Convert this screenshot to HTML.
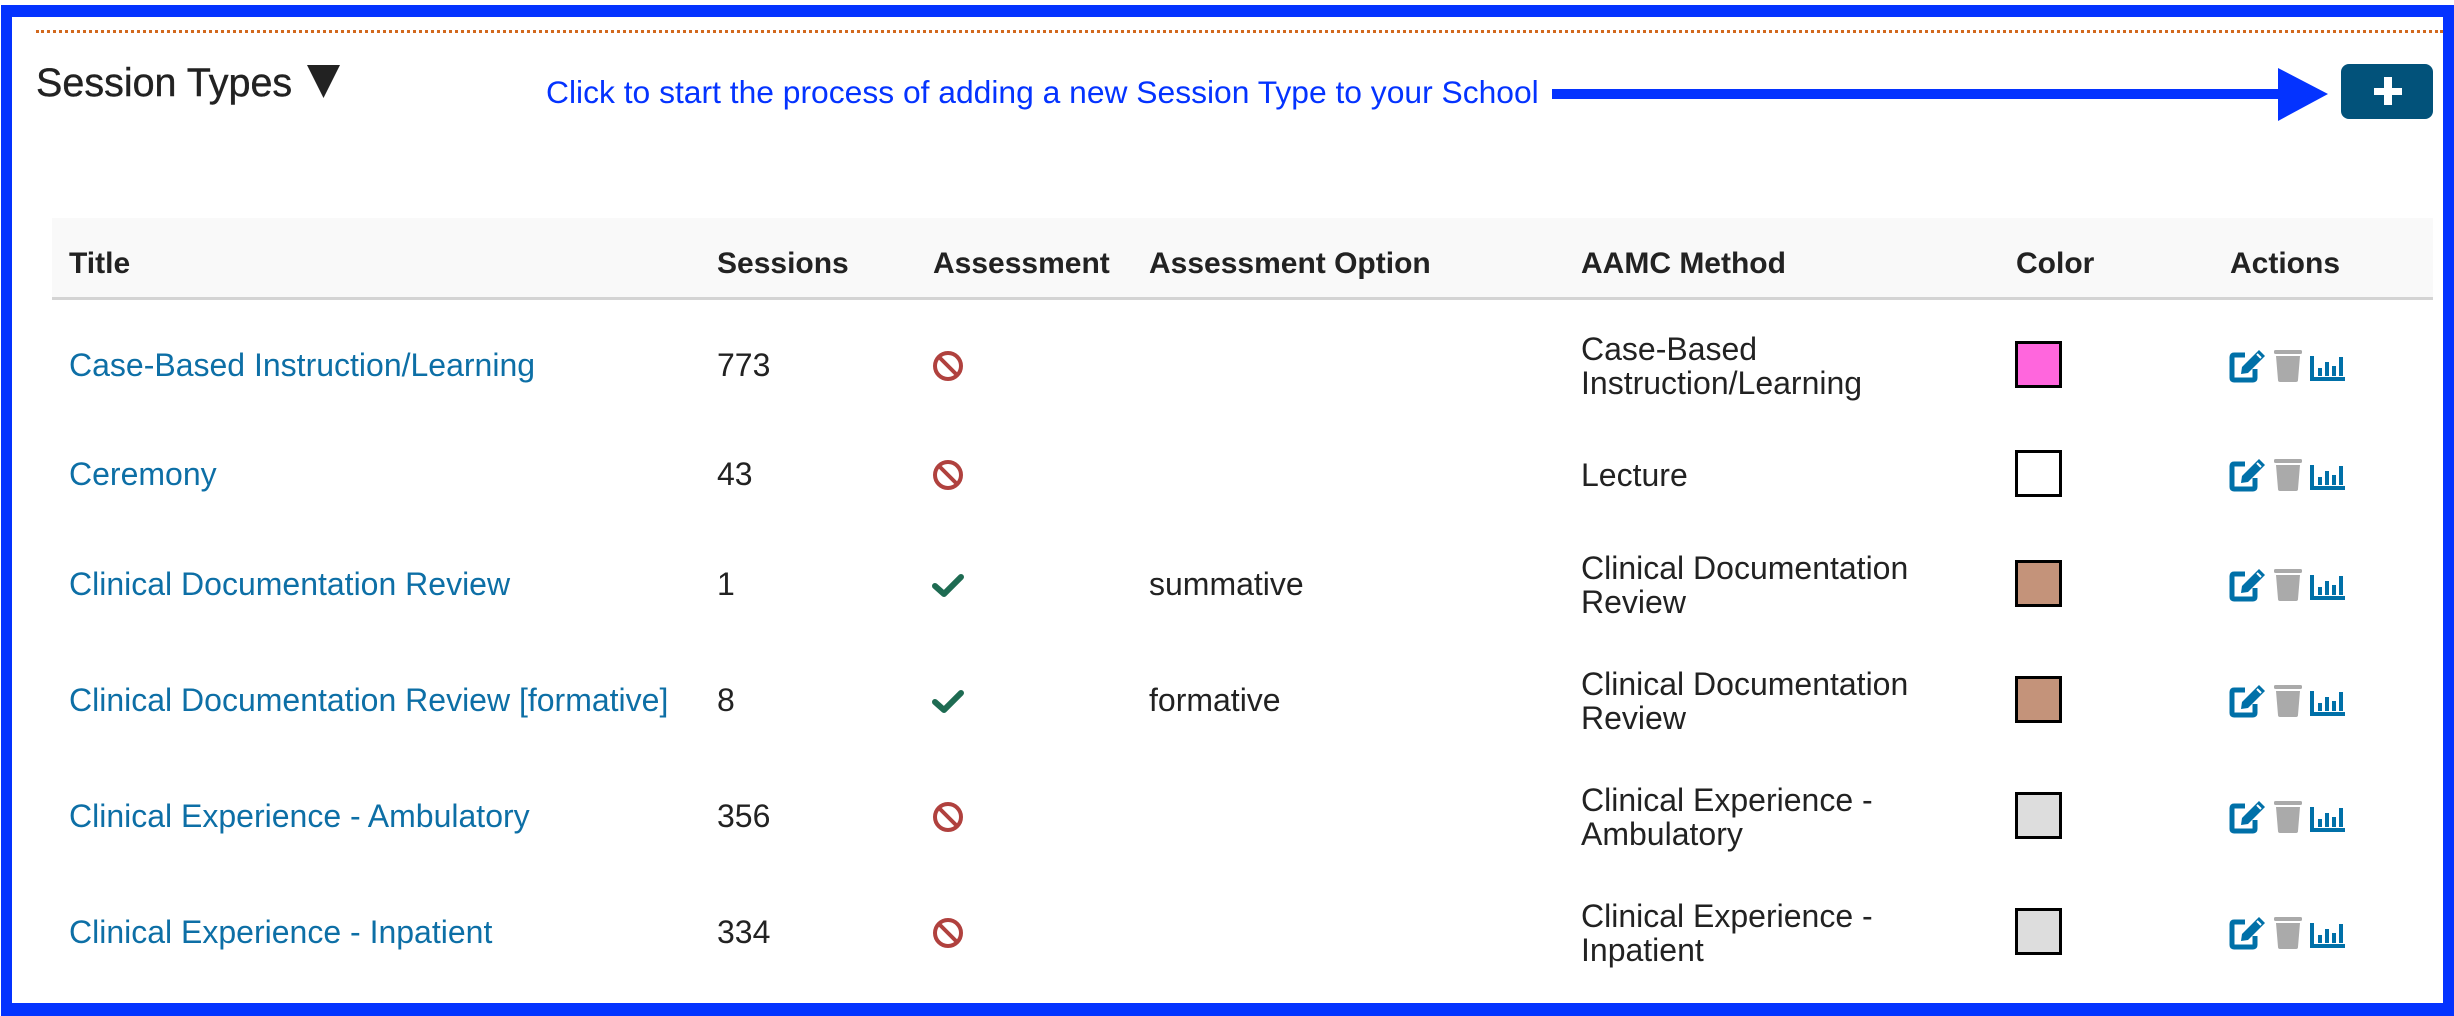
<!DOCTYPE html>
<html><head><meta charset="utf-8"><style>
*{margin:0;padding:0;box-sizing:border-box}
html,body{width:2454px;height:1016px;background:#fff;overflow:hidden;position:relative;font-family:"Liberation Sans",sans-serif}
.frame{position:absolute;left:1px;top:5px;width:2453px;height:1011px;border-style:solid;border-color:#0433ff;border-width:12px 11px 13px 11px}
.a{position:absolute;white-space:nowrap}
.h{font-weight:bold;font-size:30px;color:#222;top:247px}
.t{font-size:32px;color:#222}
.l{color:#0d6fa6;font-size:32px}
.sw{position:absolute;left:2015px;width:47px;height:47px;border:3px solid #000}
</style></head><body>
<div class="frame"></div>
<div class="a" style="left:36px;top:30px;width:2407px;border-top:3px dotted #d2691e"></div>
<div class="a" style="left:36px;top:61px;font-size:39.5px;color:#222;-webkit-text-stroke:0.4px #222">Session Types</div>
<svg class="a" style="left:307px;top:65px" width="33" height="34"><polygon points="0,0 33,0 16.5,33" fill="#222"/></svg>
<div class="a" style="left:546px;top:74px;font-size:31.8px;color:#0433ff">Click to start the process of adding a new Session Type to your School</div>
<div class="a" style="left:1552px;top:89px;width:731px;height:10px;background:#0433ff"></div>
<svg class="a" style="left:2278px;top:68px" width="50" height="53"><polygon points="0,0 50,26 0,53" fill="#0433ff"/></svg>
<div class="a" style="left:2341px;top:64px;width:92px;height:55px;background:#02527a;border-radius:8px"></div>
<div class="a" style="left:2374px;top:88px;width:28px;height:7px;background:#fff"></div>
<div class="a" style="left:2384px;top:77px;width:8px;height:28px;background:#fff"></div>
<div class="a" style="left:52px;top:218px;width:2381px;height:82px;background:#f9f9f9;border-bottom:3px solid #d4d4d4"></div>
<div class="a h" style="left:69px">Title</div>
<div class="a h" style="left:717px">Sessions</div>
<div class="a h" style="left:933px">Assessment</div>
<div class="a h" style="left:1149px">Assessment Option</div>
<div class="a h" style="left:1581px">AAMC Method</div>
<div class="a h" style="left:2016px">Color</div>
<div class="a h" style="left:2230px">Actions</div>
<div id="rows"></div>
<script>
var rows=[["Case-Based Instruction/Learning","773",0,"","Case-Based<br>Instruction/Learning","#ff66dd"],
["Ceremony","43",0,"","Lecture","#ffffff"],
["Clinical Documentation Review","1",1,"summative","Clinical Documentation<br>Review","#c4937a"],
["Clinical Documentation Review [formative]","8",1,"formative","Clinical Documentation<br>Review","#c4937a"],
["Clinical Experience - Ambulatory","356",0,"","Clinical Experience -<br>Ambulatory","#dddddd"],
["Clinical Experience - Inpatient","334",0,"","Clinical Experience -<br>Inpatient","#dddddd"]];
var cy=[366,475,585,701,817,933],h="";
rows.forEach(function(r,i){var c=cy[i],t=c-19;
h+='<div class="a t l" style="left:69px;top:'+t+'px">'+r[0]+'</div>';
h+='<div class="a t" style="left:717px;top:'+t+'px">'+r[1]+'</div>';
if(r[2]) h+='<svg class="a" style="left:932px;top:'+(c-12)+'px" width="32" height="24"><path d="M3 13 L12 21 L29 4" stroke="#1e6b52" stroke-width="6" fill="none" stroke-linecap="round" stroke-linejoin="round"/></svg>';
else h+='<svg class="a" style="left:932px;top:'+(c-16)+'px" width="32" height="32"><circle cx="16" cy="16" r="13" stroke="#b0413e" stroke-width="4" fill="none"/><path d="M7 7 L25 25" stroke="#b0413e" stroke-width="4"/></svg>';
if(r[3]) h+='<div class="a t" style="left:1149px;top:'+t+'px">'+r[3]+'</div>';
var two=r[4].indexOf('<br>')>0;
h+='<div class="a t" style="left:1581px;line-height:34px;top:'+(two?c-34:c-17)+'px">'+r[4]+'</div>';
h+='<div class="sw" style="top:'+(c-25)+'px;background:'+r[5]+'"></div>';
h+='<svg class="a" style="left:2229px;top:'+(c-16)+'px" width="120" height="34">'+
'<path d="M16 5 H5 Q3 5 3 7 V28 Q3 30 5 30 H24 Q26 30 26 28 V19" stroke="#0070a8" stroke-width="5" fill="none"/>'+
'<path d="M12 24 L13 17 L30 0 L36 6 L19 23 Z" fill="#0070a8"/><path d="M28 4 L32 8" stroke="#fff" stroke-width="2"/>'+
'<rect x="45" y="0" width="28" height="4" rx="1.5" fill="#aaa"/><rect x="54" y="-2" width="10" height="3" fill="#aaa"/>'+
'<path d="M47 6 H71 L69 30 Q69 32 67 32 H51 Q49 32 49 30 Z" fill="#aaa"/>'+
'<path d="M83 6 V29 H116" stroke="#0070a8" stroke-width="4" fill="none"/>'+
'<rect x="89" y="18" width="4" height="8" fill="#0070a8"/><rect x="96" y="12" width="4" height="14" fill="#0070a8"/><rect x="103" y="16" width="4" height="10" fill="#0070a8"/><rect x="110" y="7" width="4" height="19" fill="#0070a8"/>'+
'</svg>';});
document.getElementById('rows').innerHTML=h;
</script>
</body></html>
